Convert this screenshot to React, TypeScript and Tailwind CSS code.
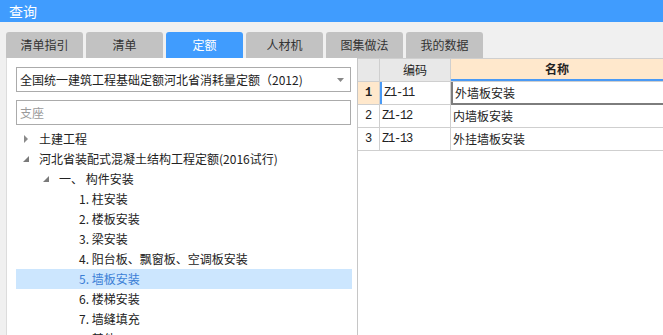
import React from "react";

const tabs = ["清单指引", "清单", "定额", "人材机", "图集做法", "我的数据"];

const rows = [
  { no: "1", code: "Z1-11", name: "外墙板安装" },
  { no: "2", code: "Z1-12", name: "内墙板安装" },
  { no: "3", code: "Z1-13", name: "外挂墙板安装" },
];

type TreeItem = {
  label: string;
  indent: number;
  icon?: "closed" | "open";
  selected?: boolean;
};

const tree: TreeItem[] = [
  { label: "土建工程", indent: 0, icon: "closed" },
  { label: "河北省装配式混凝土结构工程定额(2016试行)", indent: 0, icon: "open" },
  { label: "一、 构件安装", indent: 1, icon: "open" },
  { label: "1. 柱安装", indent: 2 },
  { label: "2. 楼板安装", indent: 2 },
  { label: "3. 梁安装", indent: 2 },
  { label: "4. 阳台板、飘窗板、空调板安装", indent: 2 },
  { label: "5. 墙板安装", indent: 2, selected: true },
  { label: "6. 楼梯安装", indent: 2 },
  { label: "7. 墙缝填充", indent: 2 },
  { label: "8. 其他", indent: 2 },
];

const indentClass = ["pl-[7px]", "pl-[27px]", "pl-[63px]"];

const Arrow = ({ kind }: { kind?: "closed" | "open" }) => {
  if (!kind) return null;
  return (
    <svg width="16" height="10" viewBox="0 0 16 10" className="shrink-0">
      {kind === "closed" ? (
        <path d="M1 1 L5 5 L1 9 Z" fill="#8a8a8a" />
      ) : (
        <path d="M6 2 L6 8 L0 8 Z" fill="#7a7a7a" />
      )}
    </svg>
  );
};

const App = () => {
  return (
    <div className="w-[663px] h-[335px] overflow-hidden bg-[#f0f0f0] flex flex-col font-['Noto_Sans_CJK_SC',sans-serif] text-[12px] text-[#222]">
      {/* 标题栏 */}
      <div className="h-[22px] bg-[#409cfe] flex items-center pl-[9px] text-white text-[14px] shrink-0">
        查询
      </div>

      {/* 页签 */}
      <div className="flex gap-[3px] pl-[6px] mt-[10px] h-[26px] shrink-0">
        {tabs.map((t) => (
          <div
            key={t}
            className={
              t === "定额"
                ? "w-[77px] rounded-t-[3px] bg-[#409cfe] text-white flex items-center justify-center"
                : "w-[77px] rounded-t-[3px] bg-[#c2c2c2] text-[#333] flex items-center justify-center"
            }
          >
            {t}
          </div>
        ))}
      </div>

      <div className="flex flex-1 min-h-0">
        {/* 左侧 */}
        <div className="w-[351px] ml-[6px] bg-white border-l border-[#dcdcdc] flex flex-col overflow-hidden">
          <div className="shrink-0 mt-[9px] ml-[9px] w-[335px] h-[25px] border border-[#ababab] flex items-center pl-[3px] pr-[6px]">
            <span className="flex-1">全国统一建筑工程基础定额河北省消耗量定额（2012)</span>
            <svg width="7" height="4" viewBox="0 0 7 4">
              <path d="M0 0 L7 0 L3.5 4 Z" fill="#888" />
            </svg>
          </div>
          <div className="shrink-0 mt-[8px] ml-[9px] w-[335px] h-[25px] border border-[#ababab] flex items-center pl-[3px] text-[#9a9a9a]">
            支座
          </div>
          <div className="shrink-0 mt-[4px] ml-[9px] w-[336px] flex flex-col">
            {tree.map((n) => (
              <div
                key={n.label}
                className={
                  "h-[20px] shrink-0 flex items-center " +
                  indentClass[n.indent] +
                  (n.selected ? " bg-[#cce6fe] text-[#3b7fd6]" : "")
                }
              >
                <Arrow kind={n.icon} />
                <span>{n.label}</span>
              </div>
            ))}
          </div>
        </div>

        {/* 右侧表格 */}
        <div className="flex-1 bg-white border-l border-[#c6c6c6] flex flex-col">
          <div className="shrink-0 flex h-[24px] border-t border-b border-[#cfcfcf]">
            <div className="w-[22px] bg-[#e8e8e8] border-r border-[#cfcfcf]" />
            <div className="w-[71px] bg-[#e8e8e8] border-r border-[#cfcfcf] flex items-center justify-center">
              编码
            </div>
            <div className="flex-1 bg-[#ffe8cc] flex items-center justify-center font-bold border-b-2 border-[#4a9af5]">
              名称
            </div>
          </div>
          {rows.map((r, i) => (
            <div key={r.no} className="shrink-0 flex h-[23px] border-b border-[#cfcfcf]">
              <div
                className={
                  "w-[22px] border-r border-[#cfcfcf] flex items-center justify-center font-['Liberation_Mono',monospace] text-[12px]" +
                  (i === 0 ? " bg-[#ffe8cc] font-bold" : "")
                }
              >
                {r.no}
              </div>
              <div
                className={
                  "w-[71px] border-r border-[#cfcfcf] flex items-center pl-[2px] font-['Liberation_Mono',monospace] text-[12px] tracking-[-1.2px]" +
                  (i === 0 ? " border-l-2 border-l-[#4a9af5]" : "")
                }
              >
                {r.code}
              </div>
              <div
                className={
                  "flex-1 flex items-center pl-[2px]" +
                  (i === 0 ? " border-l-2 border-b-2 border-[#7d7d7d] -mb-px" : "")
                }
              >
                {r.name}
              </div>
            </div>
          ))}
        </div>
      </div>
    </div>
  );
};

export default App;
